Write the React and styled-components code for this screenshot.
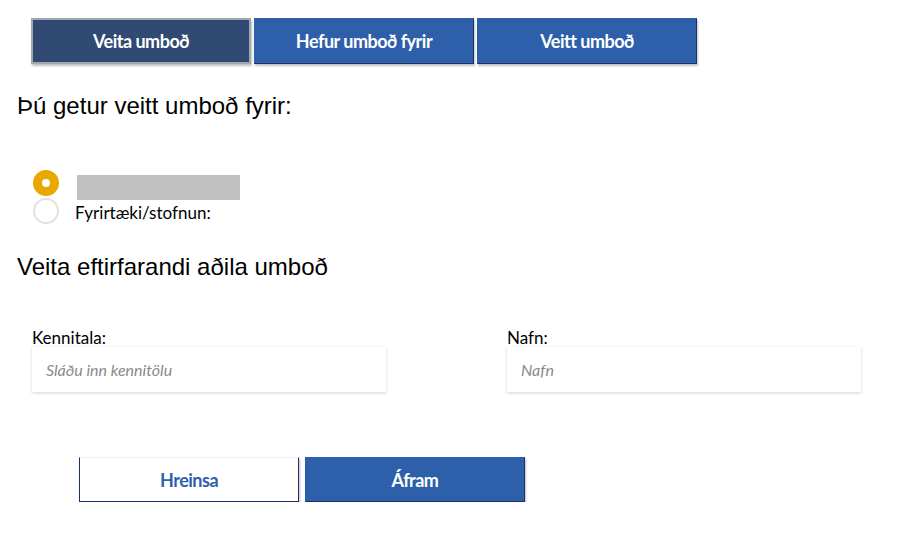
import React, { useState } from 'react'
import styled, { createGlobalStyle } from 'styled-components'

const GlobalStyle = createGlobalStyle`
  body {
    margin: 0;
    background: #fff;
    font-family: Lato, "Liberation Sans", sans-serif;
    color: #000;
  }
`

const Page = styled.div`
  width: 922px;
  padding: 18px 0 0 17px;
  box-sizing: border-box;
`

const Tabs = styled.div`
  display: flex;
  gap: 3px;
  margin-left: 14px;
`

const Tab = styled.button`
  width: 220px;
  height: 46px;
  box-sizing: border-box;
  font-family: Lato, sans-serif;
  font-weight: 700;
  font-size: 18px;
  letter-spacing: -0.5px;
  color: #fff;
  cursor: pointer;
  background: ${({ active }) => (active ? '#304a73' : '#2e5faa')};
  border: ${({ active }) => (active ? '2px solid #a3a8b0' : '1px solid #2e5faa')};
  border-right-color: ${({ active }) => (active ? '#a3a8b0' : '#1b2f6b')};
  border-bottom-color: ${({ active }) => (active ? '#a3a8b0' : '#1b2f6b')};
  box-shadow: 1px 2px 2px rgba(0, 0, 0, 0.25);
`

const Heading = styled.h2`
  margin: ${({ top }) => top}px 0 0;
  font-family: "Liberation Sans", Arial, sans-serif;
  font-weight: 400;
  font-size: 24px;
  line-height: 28px;
`

const RadioList = styled.div`
  display: flex;
  flex-direction: column;
  gap: 2px;
  margin: 50px 0 0 16px;
`

const RadioRow = styled.label`
  display: flex;
  align-items: center;
  gap: 16px;
  height: 26px;
  cursor: pointer;
  font-size: 17px;
`

const RadioDot = styled.span`
  width: 26px;
  height: 26px;
  box-sizing: border-box;
  border-radius: 50%;
  flex: none;
  border: ${({ checked }) => (checked ? '9px solid #e8a800' : '2px solid #e2e2e2')};
  background: #fff;
`

const Redacted = styled.span`
  display: block;
  align-self: flex-start;
  width: 163px;
  height: 25px;
  background: #c0c0c0;
  margin: 5px 0 0 2px;
`

const RadioText = styled.span`
  margin-top: 2px;
`

const Fields = styled.div`
  display: grid;
  grid-template-columns: 354px 354px;
  column-gap: 121px;
  margin: 47px 0 0 15px;
`

const Field = styled.div`
  display: flex;
  flex-direction: column;
`

const Label = styled.label`
  font-size: 17px;
  line-height: 19px;
`

const Input = styled.input`
  height: 45px;
  box-sizing: border-box;
  border: none;
  outline: none;
  padding: 0 14px;
  font-family: Lato, sans-serif;
  font-size: 16px;
  background: #fff;
  box-shadow: 0 1px 3px rgba(0, 0, 0, 0.18);
  &::placeholder {
    color: #8a8a8a;
    font-style: italic;
  }
`

const Actions = styled.div`
  display: flex;
  gap: 6px;
  margin: 65px 0 0 62px;
`

const ActionButton = styled.button`
  width: 220px;
  height: 45px;
  box-sizing: border-box;
  font-family: Lato, sans-serif;
  font-weight: 700;
  font-size: 18px;
  letter-spacing: -0.5px;
  cursor: pointer;
  color: ${({ primary }) => (primary ? '#fff' : '#2e5faa')};
  background: ${({ primary }) => (primary ? '#2e5faa' : '#fff')};
  border: 1px solid ${({ primary }) => (primary ? '#2e5faa' : '#1b2f6b')};
  border-top-color: ${({ primary }) => (primary ? '#2e5faa' : '#eef0f4')};
  border-right-color: #1b2f6b;
  border-bottom-color: #1b2f6b;
  box-shadow: 1px 2px 2px rgba(0, 0, 0, 0.25);
`

export default function App() {
  const [choice, setChoice] = useState('self')
  const tabs = ['Veita umboð', 'Hefur umboð fyrir', 'Veitt umboð']

  return (
    <Page>
      <GlobalStyle />
      <Tabs>
        {tabs.map((t, i) => (
          <Tab key={t} active={i === 0}>
            {t}
          </Tab>
        ))}
      </Tabs>

      <Heading top={28}>Þú getur veitt umboð fyrir:</Heading>

      <RadioList>
        <RadioRow onClick={() => setChoice('self')}>
          <RadioDot checked={choice === 'self'} />
          <Redacted />
        </RadioRow>
        <RadioRow onClick={() => setChoice('company')}>
          <RadioDot checked={choice === 'company'} />
          <RadioText>Fyrirtæki/stofnun:</RadioText>
        </RadioRow>
      </RadioList>

      <Heading top={29}>Veita eftirfarandi aðila umboð</Heading>

      <Fields>
        <Field>
          <Label>Kennitala:</Label>
          <Input placeholder="Sláðu inn kennitölu" />
        </Field>
        <Field>
          <Label>Nafn:</Label>
          <Input placeholder="Nafn" />
        </Field>
      </Fields>

      <Actions>
        <ActionButton>Hreinsa</ActionButton>
        <ActionButton primary>Áfram</ActionButton>
      </Actions>
    </Page>
  )
}
